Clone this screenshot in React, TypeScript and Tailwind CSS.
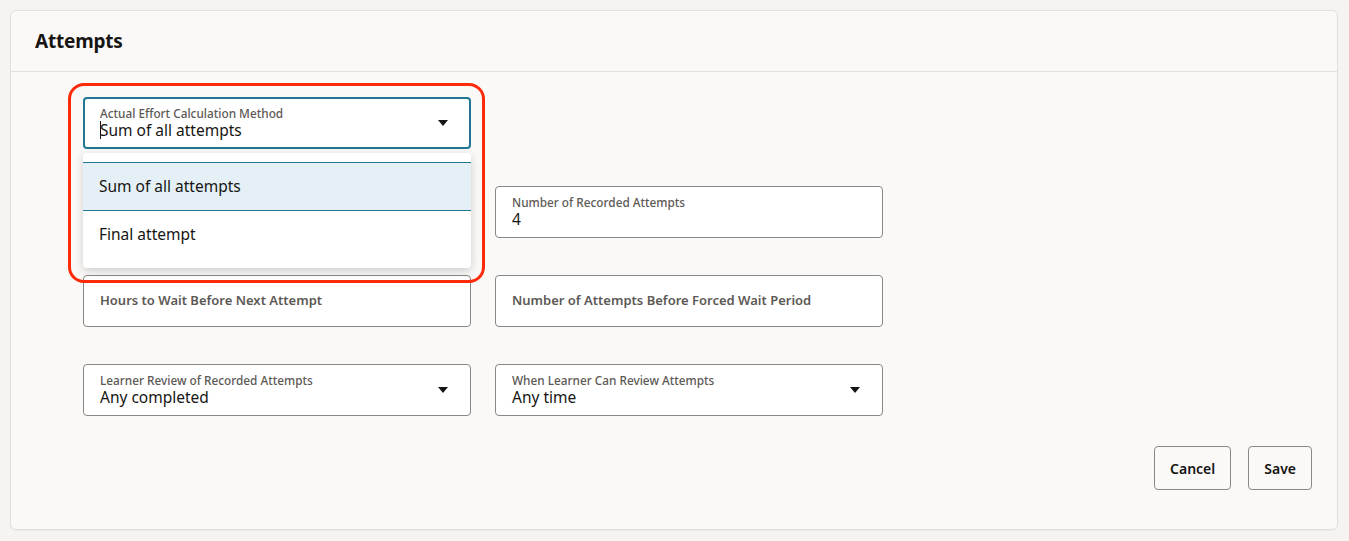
import { ReactNode } from 'react';

const FONT = { fontFamily: '"Noto Sans", "Open Sans", Arial, sans-serif' };

function Caret() {
  return (
    <svg width="10" height="6" viewBox="0 0 10 6" className="shrink-0">
      <path d="M0 0 L10 0 L5 6 Z" fill="#161513" />
    </svg>
  );
}

function Field({
  label,
  value,
  select,
  focused,
  children,
}: {
  label?: string;
  value?: string;
  select?: boolean;
  focused?: boolean;
  children?: ReactNode;
}) {
  const border = focused ? 'border-2 border-[#227593]' : 'border border-[#8a8784]';
  if (!value) {
    return (
      <div className={`relative h-[52px] rounded-[4px] bg-white ${border} flex items-center px-4`}>
        {label && <span className="text-[13px] font-semibold text-[#5c5955]">{label}</span>}
        {children}
      </div>
    );
  }
  return (
    <div
      className={`relative h-[52px] rounded-[4px] bg-white ${border} flex items-center ${
        focused ? 'pl-[15px] pr-[21px]' : 'pl-4 pr-[22px]'
      }`}
    >
      <div className="flex-1 flex flex-col justify-center">
        <span className="text-[11.8px] leading-[14px] font-medium text-[#5c5955]">{label}</span>
        <span className="text-[15.5px] leading-[20px] text-[#161513] flex items-center">
          {focused && <span className="inline-block w-px h-[18px] bg-[#161513] -mr-px" />}
          {value}
        </span>
      </div>
      {select && <Caret />}
      {children}
    </div>
  );
}

export default function App() {
  return (
    <div className="min-h-screen bg-[#f5f4f2] p-[10px] text-[#161513]" style={FONT}>
      <div className="w-[1328px] h-[520px] rounded-[6px] border border-[#e2e0dd] bg-[#faf9f8] shadow-[0_1px_2px_rgba(0,0,0,0.04)] flex flex-col">
        <div className="h-[61px] border-b border-[#e2e0dd] flex items-center px-6">
          <h1 className="text-[19px] font-bold tracking-[-0.2px]">Attempts</h1>
        </div>

        <div className="flex-1 flex flex-col pt-[25px] pl-[72px] pr-[25px]">
          <div className="grid grid-cols-[388px_388px] gap-x-[24px] gap-y-[37px]">
            <div className="relative">
              <Field label="Actual Effort Calculation Method" value="Sum of all attempts" select focused />

              <div className="absolute left-0 top-[56px] w-full z-10 bg-white rounded-[4px] shadow-[0_3px_10px_rgba(0,0,0,0.18)] pt-[9px] pb-[10px]">
                <div className="h-[49px] border-y border-[#227593] bg-[#e4f0f6] flex items-center px-4 text-[15.5px]">
                  Sum of all attempts
                </div>
                <div className="h-[47px] flex items-center px-4 text-[15.5px]">Final attempt</div>
              </div>

              <div className="absolute -left-[15px] -top-[14px] w-[417px] h-[200px] z-20 rounded-[16px] border-[3px] border-[#ff2a0a] pointer-events-none" />
            </div>
            <div />

            <Field />
            <Field label="Number of Recorded Attempts" value="4" />

            <Field label="Hours to Wait Before Next Attempt" />
            <Field label="Number of Attempts Before Forced Wait Period" />

            <Field label="Learner Review of Recorded Attempts" value="Any completed" select />
            <Field label="When Learner Can Review Attempts" value="Any time" select />
          </div>

          <div className="flex justify-end gap-[17px] mt-[30px]">
            <button className="h-[44px] px-[15px] rounded-[4px] border border-[#8a8784] bg-transparent text-[14px] font-semibold">
              Cancel
            </button>
            <button className="h-[44px] px-[15px] rounded-[4px] border border-[#8a8784] bg-transparent text-[14px] font-semibold">
              Save
            </button>
          </div>
        </div>
      </div>
    </div>
  );
}
